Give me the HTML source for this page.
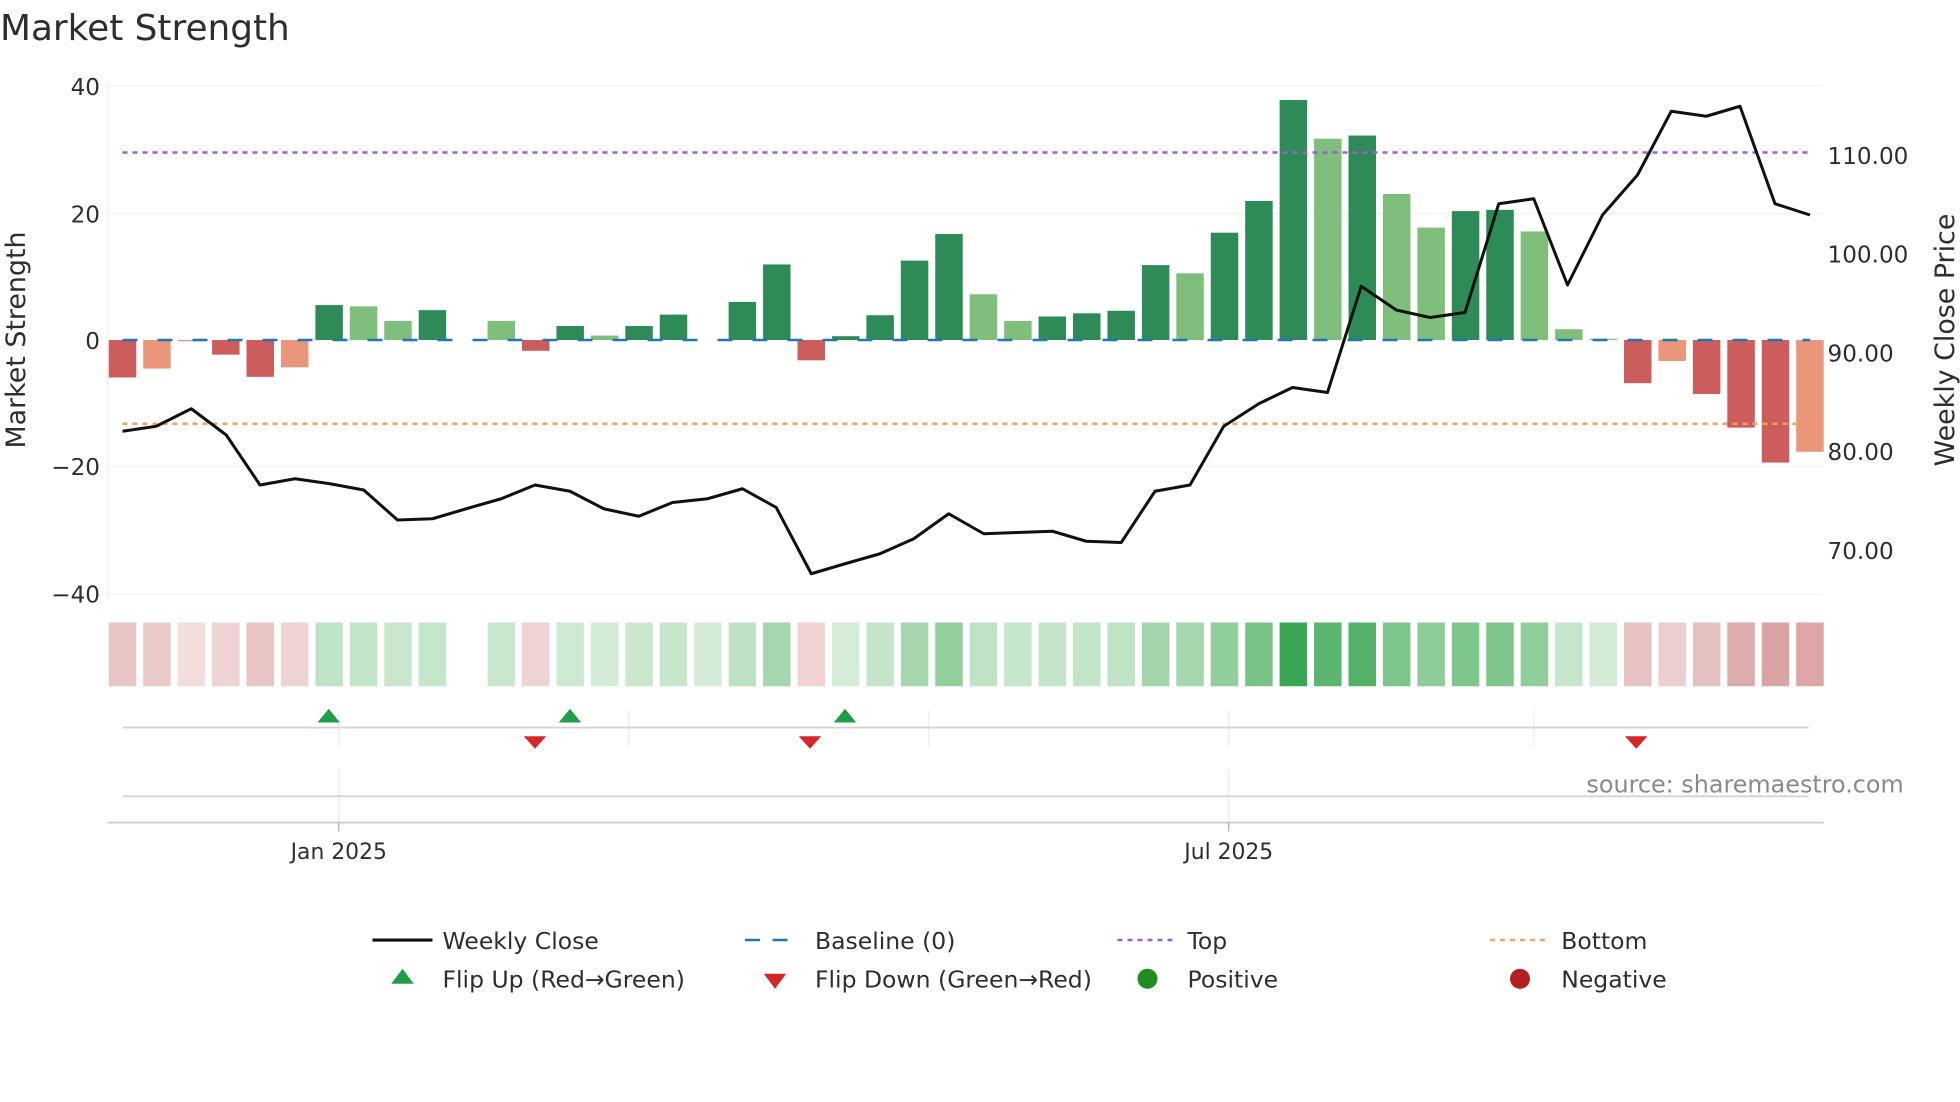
<!DOCTYPE html>
<html><head><meta charset="utf-8"><style>
html,body{margin:0;padding:0;background:#fff;width:1960px;height:1102px;overflow:hidden}
svg{display:block}
text{font-family:"DejaVu Sans","Liberation Sans",sans-serif;fill:#2e2e2e}
</style></head><body>
<svg id="s" width="1960" height="1102" viewBox="0 0 1568 881.6" xmlns="http://www.w3.org/2000/svg">
<text x="0" y="32" font-size="28.7">Market Strength</text>
<g stroke="#edf0f4" stroke-width="1">
<line x1="86" x2="1459" y1="69" y2="69"/><line x1="86" x2="1459" y1="171" y2="171"/>
<line x1="86" x2="1459" y1="373" y2="373"/><line x1="86" x2="1459" y1="475" y2="475"/>
<line x1="86" x2="86" y1="66" y2="480"/>
</g>
<g font-size="18.5" text-anchor="end">
<text x="80" y="76">40</text><text x="80" y="178">20</text><text x="80" y="279">0</text>
<text x="80" y="380">−20</text><text x="80" y="482">−40</text>
</g>
<g font-size="18.5">
<text x="1462" y="131">110.00</text><text x="1462" y="210">100.00</text><text x="1462" y="289">90.00</text>
<text x="1462" y="368">80.00</text><text x="1462" y="447">70.00</text>
</g>
<text font-size="21.5" transform="translate(20,272) rotate(-90)" text-anchor="middle">Market Strength</text>
<text font-size="21.5" transform="translate(1563,272) rotate(-90)" text-anchor="middle">Weekly Close Price</text>
<g id="bars"></g>
<line x1="98" x2="1448" y1="272" y2="272" stroke="#1f77b4" stroke-width="2" stroke-dasharray="12,16"/>
<line x1="98" x2="1448" y1="122" y2="122" stroke="#9b5fd6" stroke-width="2" stroke-dasharray="4,4"/>
<line x1="98" x2="1448" y1="339" y2="339" stroke="#f4a25a" stroke-width="2" stroke-dasharray="4,4"/>
<polyline fill="none" stroke="#111" stroke-width="2.4" stroke-linejoin="round" points="98,345 125,341 153,327 181,348 208,388 236,383 264,387 291,392 318,416 346,415 373,407 401,399 428,388 456,393 483,407 511,413 538,402 566,399 594,391 621,406 649,459 676,451 704,443 731,431 759,411 787,427 814,426 842,425 869,433 897,434 924,393 952,388 979,341 1007,323 1034,310 1062,314 1089,229 1117,248 1144,254 1172,250 1199,163 1227,159 1254,228 1282,172 1310,140 1337,89 1365,93 1392,85 1420,163 1448,172"/>
<g id="cells"></g>
<g stroke="#eceef2" stroke-width="1">
<line x1="271" x2="271" y1="568" y2="598"/><line x1="503" x2="503" y1="568" y2="598"/>
<line x1="743" x2="743" y1="568" y2="598"/><line x1="983" x2="983" y1="568" y2="598"/>
<line x1="1227" x2="1227" y1="568" y2="598"/>
<line x1="271" x2="271" y1="615" y2="660"/><line x1="983" x2="983" y1="615" y2="660"/>
</g>
<line x1="98" x2="1447" y1="582" y2="582" stroke="#d4d4d4" stroke-width="1.5"/>
<line x1="98" x2="1447" y1="637" y2="637" stroke="#d4d4d4" stroke-width="1.5"/>
<line x1="86" x2="1459" y1="658" y2="658" stroke="#cfcfcf" stroke-width="1.5"/>
<line x1="271" x2="271" y1="658" y2="665" stroke="#aaa"/><line x1="983" x2="983" y1="658" y2="665" stroke="#aaa"/>
<g fill="#1e9e48">
<polygon points="263,567 254,578 272,578"/><polygon points="456,567 447,578 465,578"/><polygon points="676,567 667,578 685,578"/>
</g>
<g fill="#d62728">
<polygon points="419,589 437,589 428,599"/><polygon points="639,589 657,589 648,599"/><polygon points="1300,589 1318,589 1309,599"/>
</g>
<text x="1523" y="634" font-size="19.1" text-anchor="end" style="fill:#8a8a8a">source: sharemaestro.com</text>
<g font-size="17.5" text-anchor="middle"><text x="271" y="687">Jan 2025</text><text x="983" y="687">Jul 2025</text></g>
<g font-size="18.8">
<line x1="298" x2="346" y1="752" y2="752" stroke="#111" stroke-width="2.5"/><text x="354" y="759">Weekly Close</text>
<line x1="596" x2="640" y1="752" y2="752" stroke="#1f77b4" stroke-width="2" stroke-dasharray="12,10"/><text x="652" y="759">Baseline (0)</text>
<line x1="894" x2="940" y1="752" y2="752" stroke="#9b5fd6" stroke-width="2" stroke-dasharray="4,4"/><text x="950" y="759">Top</text>
<line x1="1192" x2="1240" y1="752" y2="752" stroke="#f4a25a" stroke-width="2" stroke-dasharray="4,4"/><text x="1249" y="759">Bottom</text>
<polygon points="322,775 313,787 331,787" fill="#1e9e48"/><text x="354" y="790">Flip Up (Red→Green)</text>
<polygon points="611,779 629,779 620,791" fill="#d62728"/><text x="652" y="790">Flip Down (Green→Red)</text>
<circle cx="918" cy="783" r="8" fill="#228b22"/><text x="950" y="790">Positive</text>
<circle cx="1216" cy="783" r="8" fill="#b22222"/><text x="1249" y="790">Negative</text>
</g>
</svg>
<script>
var v=[-5.9,-4.5,-0.2,-2.3,-5.8,-4.3,5.5,5.3,3,4.7,0,3,-1.7,2.2,0.7,2.2,4,0,6,11.9,-3.2,0.6,3.9,12.5,16.7,7.2,3,3.7,4.2,4.6,11.8,10.5,16.9,21.9,37.8,31.7,32.2,23,17.7,20.3,20.5,17.1,1.7,0.2,-6.8,-3.3,-8.5,-13.8,-19.3,-17.6];
var k="RSSRRSDLLDXLRDLDDXDDRDDDDLLDDDDLDDDLDLLDDLLLRSRRRS";
var c=["#e8c4c4","#ebcaca","#f2dcdc","#f0d4d4","#e9c5c5","#efd2d2","#bfe3c6","#c2e5c8","#c8e7cd","#c4e6ca","","#c8e7cd","#efd3d3","#cde9d1","#d4ecd7","#cbe8cf","#c8e6cc","#d4ecd7","#bfe2c5","#a6d6af","#f2d2d2","#d4ecd8","#c4e5ca","#a5d6ae","#93cf9d","#c0e3c6","#c6e6cb","#c5e5ca","#c2e4c8","#bfe3c5","#a3d5ac","#a5d6ae","#90ce9b","#78c488","#38a655","#5ab56e","#53b268","#7cc58b","#8ecd99","#7fc68d","#7fc68d","#8fcd9a","#c6e6cb","#d2ebd5","#e6c2c2","#edcfcf","#e5c0c0","#dcabab","#d9a3a3","#dea6a6"];
var col={R:"#cd5c5c",S:"#e9967a",D:"#2e8b57",L:"#7fbf7b"};
var ns="http://www.w3.org/2000/svg",b=document.getElementById("bars"),g=document.getElementById("cells");
for(var i=0;i<50;i++){var x=98+i*27.55-11;
if(v[i]!=0){var r=document.createElementNS(ns,"rect");var h=Math.abs(v[i])*5.08;
r.setAttribute("x",x);r.setAttribute("width",22);r.setAttribute("y",v[i]>0?272-h:272);r.setAttribute("height",Math.max(h,1));r.setAttribute("fill",col[k[i]]||"#7fbf7b");b.appendChild(r);}
if(c[i]){var q=document.createElementNS(ns,"rect");q.setAttribute("x",x);q.setAttribute("width",22);q.setAttribute("y",498);q.setAttribute("height",51);q.setAttribute("fill",c[i]);g.appendChild(q);}}
</script>
</body></html>
